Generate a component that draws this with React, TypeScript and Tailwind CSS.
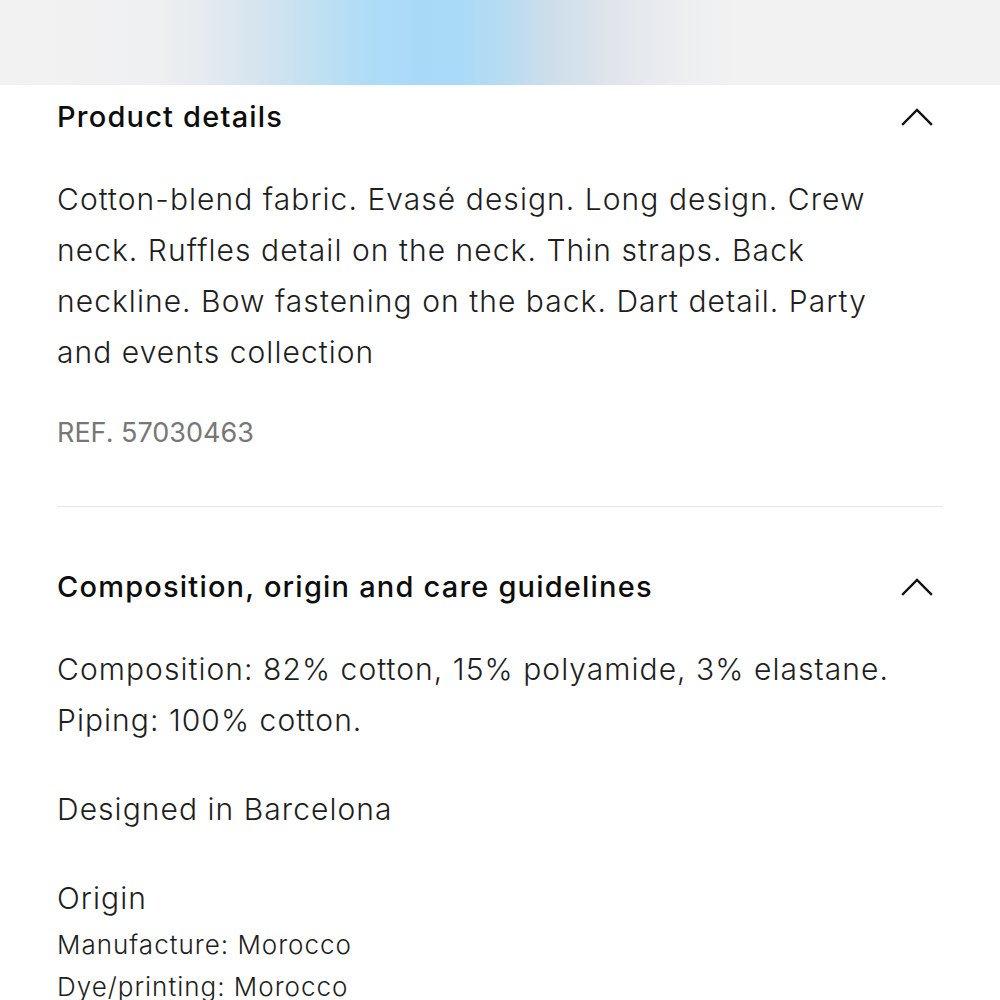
import { FC } from "react";

const Chevron: FC = () => (
  <svg width="32" height="18" viewBox="0 0 32 18" fill="none" className="mr-[10px]">
    <polyline
      points="2,16 16,2 30,16"
      stroke="#111"
      strokeWidth="2.4"
      strokeLinecap="square"
      strokeLinejoin="miter"
    />
  </svg>
);

const SectionHeader: FC<{ title: string }> = ({ title }) => (
  <div className="h-[64px] flex items-center justify-between">
    <h2 className="text-[29px] font-[450] text-[#0d0d0d] tracking-[1.2px]">{title}</h2>
    <Chevron />
  </div>
);

const App: FC = () => {
  const body = "text-[30px] font-light text-[#1e1e1e] leading-[51px] tracking-[1.05px]";
  return (
    <div
      className="w-[1000px] h-[1000px] overflow-hidden bg-white"
      style={{ fontFamily: "Inter, 'Liberation Sans', sans-serif" }}
    >
      <div className="h-[85px] bg-[linear-gradient(90deg,#f2f2f2_0%,#eff0f1_15%,#e6ebef_20%,#d2e3ef_27%,#bfe0f3_32%,#aedcf7_37%,#a8daf8_42%,#a9daf7_46%,#b5dcf2_50%,#cddeea_55%,#e2e6ec_62%,#eceef0_68%,#f2f2f2_74%,#f2f2f2_100%)]" />

      <div className="px-[57px]">
        <section className="border-b border-[#e6e6e6] pb-[48px]">
          <SectionHeader title="Product details" />
          <div className={`${body} mt-[25px]`}>
            <div>Cotton-blend fabric. Evasé design. Long design. Crew</div>
            <div>neck. Ruffles detail on the neck. Thin straps. Back</div>
            <div>neckline. Bow fastening on the back. Dart detail. Party</div>
            <div>and events collection</div>
          </div>
          <p className="mt-[29px] text-[27px] leading-[51px] text-[#777] font-normal">REF. 57030463</p>
        </section>

        <section className="mt-[48px]">
          <SectionHeader title="Composition, origin and care guidelines" />
          <div className={`${body} mt-[25px]`}>
            <div>Composition: 82% cotton, 15% polyamide, 3% elastane.</div>
            <div>Piping: 100% cotton.</div>
          </div>
          <p className={`${body} mt-[38px]`}>Designed in Barcelona</p>
          <p className={`${body} mt-[38px]`}>Origin</p>
          <div className="text-[26px] font-light text-[#1e1e1e] leading-[42px] tracking-[1px]">
            <div>Manufacture: Morocco</div>
            <div>Dye/printing: Morocco</div>
          </div>
        </section>
      </div>
    </div>
  );
};

export default App;
